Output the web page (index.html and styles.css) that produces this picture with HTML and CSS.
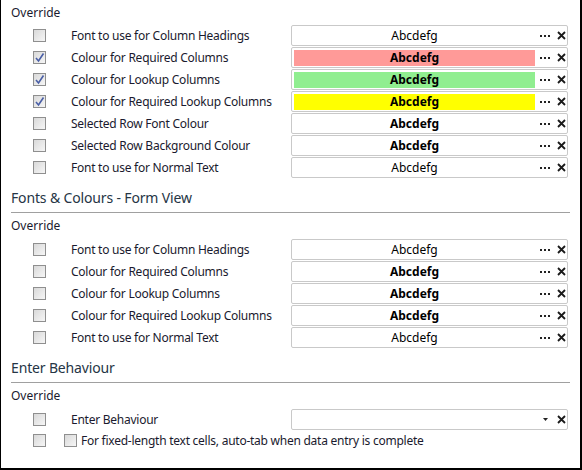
FILE: index.html
```
<!DOCTYPE html>
<html lang="en">
<head>
    <meta charset="UTF-8">
    <title>Options - Fonts &amp; Colours</title>
    <link rel="stylesheet" href="styles.css">
</head>
<body>
    <div class="panel">
        <!-- Grid view -->
        <div class="override first">Override</div>

        <div class="row">
            <span class="cb"></span>
            <span class="label">Font to use for Column Headings</span>
            <div class="field"><span class="swatch">Abcdefg</span><span class="dots"><i></i><i></i><i></i></span><span class="clear"><svg width="9" height="9" viewBox="0 0 9 9"><path d="M1 1L8 8M8 1L1 8" /></svg></span></div>
        </div>
        <div class="row">
            <span class="cb checked"><svg width="11" height="11" viewBox="0 0 11 11"><path d="M2 6L4.5 9L9.5 1.5" /></svg></span>
            <span class="label">Colour for Required Columns</span>
            <div class="field"><span class="swatch bold red">Abcdefg</span><span class="dots"><i></i><i></i><i></i></span><span class="clear"><svg width="9" height="9" viewBox="0 0 9 9"><path d="M1 1L8 8M8 1L1 8" /></svg></span></div>
        </div>
        <div class="row">
            <span class="cb checked"><svg width="11" height="11" viewBox="0 0 11 11"><path d="M2 6L4.5 9L9.5 1.5" /></svg></span>
            <span class="label">Colour for Lookup Columns</span>
            <div class="field"><span class="swatch bold green">Abcdefg</span><span class="dots"><i></i><i></i><i></i></span><span class="clear"><svg width="9" height="9" viewBox="0 0 9 9"><path d="M1 1L8 8M8 1L1 8" /></svg></span></div>
        </div>
        <div class="row">
            <span class="cb checked"><svg width="11" height="11" viewBox="0 0 11 11"><path d="M2 6L4.5 9L9.5 1.5" /></svg></span>
            <span class="label">Colour for Required Lookup Columns</span>
            <div class="field"><span class="swatch bold yellow">Abcdefg</span><span class="dots"><i></i><i></i><i></i></span><span class="clear"><svg width="9" height="9" viewBox="0 0 9 9"><path d="M1 1L8 8M8 1L1 8" /></svg></span></div>
        </div>
        <div class="row">
            <span class="cb"></span>
            <span class="label">Selected Row Font Colour</span>
            <div class="field"><span class="swatch bold">Abcdefg</span><span class="dots"><i></i><i></i><i></i></span><span class="clear"><svg width="9" height="9" viewBox="0 0 9 9"><path d="M1 1L8 8M8 1L1 8" /></svg></span></div>
        </div>
        <div class="row">
            <span class="cb"></span>
            <span class="label">Selected Row Background Colour</span>
            <div class="field"><span class="swatch bold">Abcdefg</span><span class="dots"><i></i><i></i><i></i></span><span class="clear"><svg width="9" height="9" viewBox="0 0 9 9"><path d="M1 1L8 8M8 1L1 8" /></svg></span></div>
        </div>
        <div class="row">
            <span class="cb"></span>
            <span class="label">Font to use for Normal Text</span>
            <div class="field"><span class="swatch">Abcdefg</span><span class="dots"><i></i><i></i><i></i></span><span class="clear"><svg width="9" height="9" viewBox="0 0 9 9"><path d="M1 1L8 8M8 1L1 8" /></svg></span></div>
        </div>

        <!-- Form view -->
        <h2 class="section-head">Fonts &amp; Colours - Form View</h2>
        <div class="override">Override</div>

        <div class="row">
            <span class="cb"></span>
            <span class="label">Font to use for Column Headings</span>
            <div class="field"><span class="swatch">Abcdefg</span><span class="dots"><i></i><i></i><i></i></span><span class="clear"><svg width="9" height="9" viewBox="0 0 9 9"><path d="M1 1L8 8M8 1L1 8" /></svg></span></div>
        </div>
        <div class="row">
            <span class="cb"></span>
            <span class="label">Colour for Required Columns</span>
            <div class="field"><span class="swatch bold">Abcdefg</span><span class="dots"><i></i><i></i><i></i></span><span class="clear"><svg width="9" height="9" viewBox="0 0 9 9"><path d="M1 1L8 8M8 1L1 8" /></svg></span></div>
        </div>
        <div class="row">
            <span class="cb"></span>
            <span class="label">Colour for Lookup Columns</span>
            <div class="field"><span class="swatch bold">Abcdefg</span><span class="dots"><i></i><i></i><i></i></span><span class="clear"><svg width="9" height="9" viewBox="0 0 9 9"><path d="M1 1L8 8M8 1L1 8" /></svg></span></div>
        </div>
        <div class="row">
            <span class="cb"></span>
            <span class="label">Colour for Required Lookup Columns</span>
            <div class="field"><span class="swatch bold">Abcdefg</span><span class="dots"><i></i><i></i><i></i></span><span class="clear"><svg width="9" height="9" viewBox="0 0 9 9"><path d="M1 1L8 8M8 1L1 8" /></svg></span></div>
        </div>
        <div class="row">
            <span class="cb"></span>
            <span class="label">Font to use for Normal Text</span>
            <div class="field"><span class="swatch">Abcdefg</span><span class="dots"><i></i><i></i><i></i></span><span class="clear"><svg width="9" height="9" viewBox="0 0 9 9"><path d="M1 1L8 8M8 1L1 8" /></svg></span></div>
        </div>

        <!-- Enter behaviour -->
        <h2 class="section-head">Enter Behaviour</h2>
        <div class="override">Override</div>

        <div class="row">
            <span class="cb"></span>
            <span class="label">Enter Behaviour</span>
            <div class="field"><span class="swatch"></span><span class="arrow"><svg width="5" height="3" viewBox="0 0 5 3"><path d="M0 0H5L2.5 3Z" /></svg></span><span class="clear"><svg width="9" height="9" viewBox="0 0 9 9"><path d="M1 1L8 8M8 1L1 8" /></svg></span></div>
        </div>
        <div class="row short">
            <span class="cb"></span>
            <span class="cb inner"></span>
            <span class="label tight">For fixed-length text cells, auto-tab when data entry is complete</span>
        </div>
    </div>
</body>
</html>
```
FILE: styles.css
```
html, body {
    margin: 0;
    padding: 0;
    background: #fff;
}

body {
    font-family: "Noto Sans", "Open Sans", sans-serif;
    font-size: 12px;
    color: #1a1a2e;
}

.panel {
    box-sizing: border-box;
    width: 582px;
    height: 470px;
    border-left: 1px solid #000;
    border-right: 2px solid #000;
    border-bottom: 2px solid #000;
    overflow: hidden;
}

.override {
    height: 20px;
    line-height: 20px;
    padding-left: 10px;
    margin: 3px 0 2px;
}

.override.first {
    margin-bottom: 1px;
}

.row {
    display: flex;
    align-items: center;
    height: 22px;
    padding-left: 32px;
    padding-right: 12px;
}

.row.short {
    height: 21px;
}

.cb {
    box-sizing: border-box;
    width: 13px;
    height: 13px;
    border: 1px solid #8f8f8f;
    background: linear-gradient(135deg, #d9d9d9, #f6f6f6);
    display: flex;
    align-items: center;
    justify-content: center;
    flex-shrink: 0;
}

.cb svg path {
    fill: none;
    stroke: #4a5fa6;
    stroke-width: 1.6;
}

.cb.inner {
    margin-left: 18px;
}

.label {
    margin-left: 25px;
    white-space: nowrap;
    letter-spacing: -0.25px;
}

.label.tight {
    margin-left: 4px;
}

.field {
    box-sizing: border-box;
    display: flex;
    align-items: center;
    width: 277px;
    height: 21px;
    margin-left: auto;
    margin-top: 1px;
    padding: 0 1px 0 2px;
    border: 1px solid #c9c9c9;
    border-radius: 2px;
    background: #fff;
}

.swatch {
    flex: 1;
    height: 16px;
    line-height: 16px;
    text-align: center;
    color: #000;
}

.swatch.bold {
    font-weight: 700;
}

.red {
    background: #ff9a98;
}

.green {
    background: #90ee90;
}

.yellow {
    background: #ffff00;
}

.dots {
    display: flex;
    gap: 2px;
    margin-left: 5px;
    width: 11px;
}

.dots i {
    display: block;
    width: 2px;
    height: 2px;
    background: #222;
}

.arrow {
    display: flex;
    margin-left: 5px;
    width: 11px;
    justify-content: center;
}

.arrow svg path {
    fill: #222;
}

.clear {
    display: flex;
    margin-left: 6px;
}

.clear svg path {
    fill: none;
    stroke: #1a1a1a;
    stroke-width: 1.8;
}

.section-head {
    margin: 10px 10px 0 10px;
    padding-bottom: 4px;
    border-bottom: 1px solid #a0a0a0;
    font-size: 14px;
    font-weight: 400;
    line-height: 20px;
    letter-spacing: -0.15px;
    color: #253545;
}
```
